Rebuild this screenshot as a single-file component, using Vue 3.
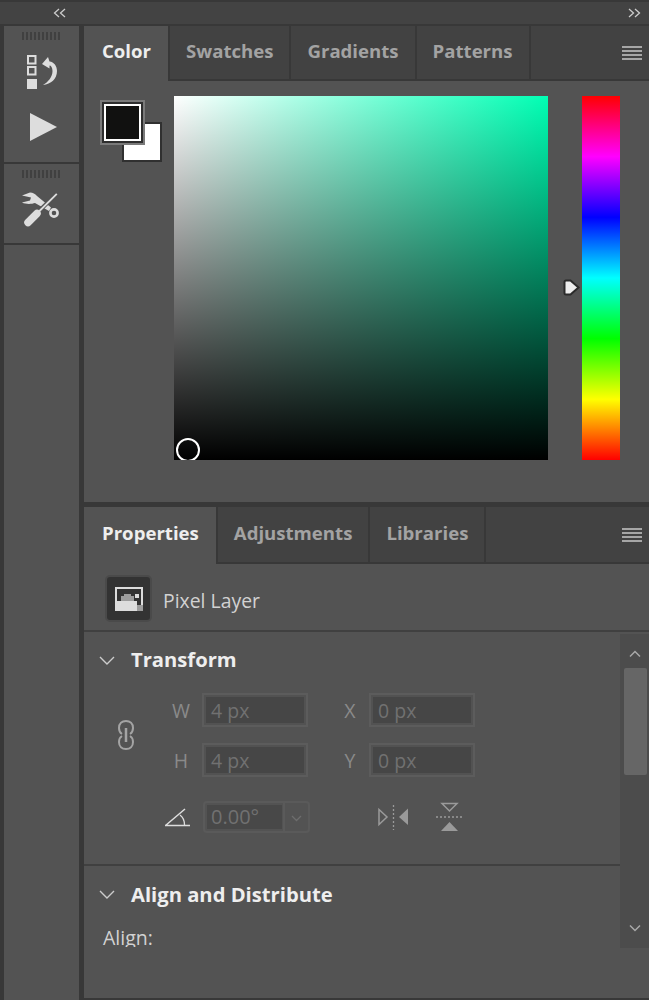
<template>
  <div class="app">
    <!-- collapse strip -->
    <div class="topbar">
      <div class="top-left">
        <svg width="14" height="10" viewBox="0 0 14 10"><path d="M6 1L1.500 5 6 9M12 1L7.500 5 12 9" fill="none" stroke="#ccc" stroke-width="1.300"/></svg>
      </div>
      <div class="top-right">
        <svg width="14" height="10" viewBox="0 0 14 10"><path d="M2 1L6.500 5 2 9M8 1L12.500 5 8 9" fill="none" stroke="#ccc" stroke-width="1.300"/></svg>
      </div>
    </div>

    <div class="body">
      <!-- left icon dock -->
      <aside class="dock">
        <div class="dock-group g1">
          <div class="grip"></div>
          <button class="dock-btn history" type="button">
            <svg width="30" height="34" viewBox="0 0 30 34">
              <rect x="1" y="1" width="7.500" height="7.500" fill="none" stroke="#ddd" stroke-width="2"/>
              <rect x="1" y="12" width="7.500" height="7.500" fill="none" stroke="#ddd" stroke-width="2"/>
              <rect x="0" y="24" width="10" height="10" fill="#ddd"/>
              <path d="M15 9L21 2 22.500 6.500C27 7 30 11 30 16 30 24 24 29 16 30 21 27 25.500 22 25.500 16 25.500 12.500 24 10.500 22.500 10.500V13.500Z" fill="#ddd"/>
            </svg>
          </button>
          <button class="dock-btn play" type="button">
            <svg width="27" height="28" viewBox="0 0 27 28"><path d="M0 0L27 14 0 28Z" fill="#ddd"/></svg>
          </button>
        </div>
        <div class="dock-group g2">
          <div class="grip"></div>
          <button class="dock-btn tools" type="button">
            <svg width="38" height="36" viewBox="0 0 38 36">
              <path d="M0 3.500L8 0.500C11 0.500 13 2 15 4L29 15.500 27 19 13 11C10 12 4 12.500 0 10.500L8 8.500 9 5.500Z" fill="#ddd"/>
              <circle cx="32" cy="21" r="3.600" fill="none" stroke="#ddd" stroke-width="2.600"/>
              <path d="M34.500 2L16 20" stroke="#535353" stroke-width="4"/>
              <path d="M34.800 1.800L16 20.500" stroke="#ddd" stroke-width="1.800"/>
              <path d="M6 30.500L15 21.500" stroke="#ddd" stroke-width="7.500" stroke-linecap="round"/>
            </svg>
          </button>
        </div>
        <div class="dock-rest"></div>
      </aside>

      <main class="main">
        <!-- Color panel -->
        <section class="panel color-panel">
          <div class="tabs">
            <div v-for="t in colorTabs" :key="t" class="tab" :class="{ active: t === 'Color' }">{{ t }}</div>
            <div class="tab-fill">
              <span class="menu-icon"><i></i><i></i><i></i><i></i></span>
            </div>
          </div>
          <div class="color-body">
            <div class="swatches">
              <div class="swatch bg"></div>
              <div class="swatch fg"></div>
            </div>
            <div class="picker">
              <div class="picker-dot"></div>
            </div>
            <div class="hue-wrap">
              <div class="hue"></div>
              <svg class="hue-marker" width="17" height="17" viewBox="0 0 17 17">
                <path d="M3 1.500H7.500L15.500 8.500 7.500 15.500H3C2 15.500 1.500 15 1.500 14V3C1.500 2 2 1.500 3 1.500Z" fill="#eee" stroke="#2b2b2b" stroke-width="2"/>
              </svg>
            </div>
          </div>
        </section>

        <div class="panel-gap"></div>

        <!-- Properties panel -->
        <section class="panel props-panel">
          <div class="tabs">
            <div v-for="t in propTabs" :key="t" class="tab" :class="{ active: t === 'Properties' }">{{ t }}</div>
            <div class="tab-fill">
              <span class="menu-icon"><i></i><i></i><i></i><i></i></span>
            </div>
          </div>

          <div class="layer-row">
            <div class="layer-thumb">
              <svg width="28" height="24" viewBox="0 0 28 24" shape-rendering="crispEdges">
                <rect x="0" y="0" width="28" height="24" fill="#ddd"/>
                <rect x="2" y="2" width="24" height="16" fill="#333"/>
                <path d="M9 7H16V9H19V14H6V9H9Z" fill="#9c9c9c"/>
                <path d="M2 18V14H22V18Z" fill="#ddd"/>
                <rect x="20" y="7" width="4" height="4" fill="#ddd"/>
                <rect x="22" y="18" width="6" height="6" fill="#9c9c9c"/>
              </svg>
            </div>
            <span class="layer-name">Pixel Layer</span>
          </div>

          <div class="props-scroll">
            <div class="props-content">
              <div class="section transform">
                <div class="sec-head">
                  <svg class="chev" width="16" height="10" viewBox="0 0 16 10"><path d="M1 1L8 8 15 1" fill="none" stroke="#ccc" stroke-width="1.400"/></svg>
                  <span class="sec-title">Transform</span>
                </div>
                <div class="tf-grid">
                  <svg class="link" width="16" height="30" viewBox="0 0 16 30">
                    <path d="M4 14C1.500 12.500 1 10.500 1 8 1 3.500 4 1 8 1 12 1 15 3.500 15 8 15 10.500 14.500 12.500 12 14M4 16C1.500 17.500 1 19.500 1 22 1 26.500 4 29 8 29 12 29 15 26.500 15 22 15 19.500 14.500 17.500 12 16" fill="none" stroke="#a4a4a4" stroke-width="2"/>
                    <path d="M8 8V22" stroke="#a4a4a4" stroke-width="2.500"/>
                  </svg>
                  <div class="fields">
                    <div class="field-row">
                      <label class="f-label">W</label><div class="f-input">4 px</div>
                      <label class="f-label second">X</label><div class="f-input">0 px</div>
                    </div>
                    <div class="field-row">
                      <label class="f-label">H</label><div class="f-input">4 px</div>
                      <label class="f-label second">Y</label><div class="f-input">0 px</div>
                    </div>
                  </div>
                </div>
                <div class="angle-row">
                  <svg class="angle" width="27" height="19" viewBox="0 0 27 19">
                    <path d="M1 17.500H26M1.500 17.500L21 1" fill="none" stroke="#ddd" stroke-width="1.500"/>
                    <path d="M16 7C19.500 9.500 20.500 13 20.500 17" fill="none" stroke="#ddd" stroke-width="1.300"/>
                  </svg>
                  <div class="angle-box">
                    <span class="angle-val">0.00°</span>
                    <span class="angle-drop">
                      <svg width="11" height="7" viewBox="0 0 11 7"><path d="M1 1L5.500 5.500 10 1" fill="none" stroke="#6d6d6d" stroke-width="1.300"/></svg>
                    </span>
                  </div>
                  <svg class="flip-h" width="31" height="28" viewBox="0 0 31 28">
                    <path d="M1 6.500L9 14 1 21.500Z" fill="none" stroke="#9a9a9a" stroke-width="1.500"/>
                    <path d="M30 5.500V22L21 14Z" fill="#9a9a9a"/>
                    <path d="M15.500 2V27" stroke="#9a9a9a" stroke-width="1.300" stroke-dasharray="2 2"/>
                  </svg>
                  <svg class="flip-v" width="27" height="30" viewBox="0 0 27 30">
                    <path d="M6 1.500H21L13.500 9Z" fill="none" stroke="#9a9a9a" stroke-width="1.500"/>
                    <path d="M5 29L13.500 20 22 29Z" fill="#9a9a9a"/>
                    <path d="M0 15H27" stroke="#9a9a9a" stroke-width="1.300" stroke-dasharray="2 2"/>
                  </svg>
                </div>
              </div>
              <div class="section align">
                <div class="sec-head">
                  <svg class="chev" width="16" height="10" viewBox="0 0 16 10"><path d="M1 1L8 8 15 1" fill="none" stroke="#ccc" stroke-width="1.400"/></svg>
                  <span class="sec-title">Align and Distribute</span>
                </div>
                <div class="align-label">Align:</div>
              </div>
            </div>
            <div class="scrollbar">
              <svg class="sb-arrow up" width="12" height="8" viewBox="0 0 12 8"><path d="M1 6.500L6 1.500 11 6.500" fill="none" stroke="#a8a8a8" stroke-width="1.500"/></svg>
              <div class="sb-thumb"></div>
              <div class="sb-track"></div>
              <svg class="sb-arrow down" width="12" height="8" viewBox="0 0 12 8"><path d="M1 1.500L6 6.500 11 1.500" fill="none" stroke="#a8a8a8" stroke-width="1.500"/></svg>
            </div>
          </div>
        </section>
      </main>
    </div>
  </div>
</template>

<script setup>
const colorTabs = ['Color', 'Swatches', 'Gradients', 'Patterns']
const propTabs = ['Properties', 'Adjustments', 'Libraries']
</script>

<style>
html, body { margin: 0; background: #383838; }
</style>

<style scoped>
.app {
  width: 649px; height: 1000px; overflow: hidden;
  background: #383838;
  font-family: "Open Sans", "Noto Sans", sans-serif;
  display: flex; flex-direction: column;
}
.topbar {
  height: 22px; margin: 2px 0;
  background: #434343;
  display: flex; align-items: center; justify-content: space-between;
  flex: none;
}
.top-left { width: 120px; display: flex; justify-content: center; }
.top-right { padding-right: 8px; display: flex; }

.body { flex: 1; display: flex; min-height: 0; }

.dock {
  width: 75px; margin-left: 4px; margin-right: 5px;
  display: flex; flex-direction: column;
  flex: none;
}
.dock-group { background: #535353; display: flex; flex-direction: column; align-items: center; }
.g1 { height: 136px; margin-bottom: 2px; }
.g2 { height: 79px; margin-bottom: 2px; }
.dock-rest { flex: 1; background: #535353; }
.grip {
  width: 39px; height: 8px; margin-top: 6px;
  background: repeating-linear-gradient(to right, #404040 0 2px, #535353 2px 4px);
}
.dock-btn { border: 0; background: none; padding: 0; display: flex; line-height: 0; }
.history { margin-top: 15px; margin-left: 1px; }
.play { margin-top: 24px; margin-left: 3px; }
.tools { margin-top: 14px; margin-right: 2px; }

.main { flex: 1; display: flex; flex-direction: column; min-width: 0; }
.panel { background: #535353; display: flex; flex-direction: column; }
.color-panel { height: 476px; flex: none; }
.panel-gap { height: 5px; flex: none; }
.props-panel { flex: 1; margin-bottom: 2px; min-height: 0; }

.tabs { display: flex; height: 55px; flex: none; background: #424242; }
.props-panel .tabs { height: 57px; }
.tab {
  padding: 0 16px 5px 16px;
  display: flex; align-items: center;
  font-size: 18.600px; font-weight: 700; color: #a3a3a3;
  border-right: 2px solid #383838;
  border-bottom: 2px solid #383838;
  box-sizing: border-box;
}
.tab:first-child { padding-left: 18px; padding-right: 17px; }
.tab.active {
  background: #535353; color: #eeeeee;
  border-bottom: 0;
  padding-bottom: 7px;
}
.tab-fill {
  flex: 1;
  border-bottom: 2px solid #383838;
  display: flex; align-items: center; justify-content: flex-end;
  padding-right: 7px;
}
.menu-icon { display: flex; flex-direction: column; gap: 2px; }
.menu-icon i { display: block; width: 20px; height: 2px; background: #a6a6a6; }

.color-body {
  flex: 1; position: relative;
  display: flex; align-items: flex-start;
  padding: 15px 29px 0 16px;
}
.swatches { width: 62px; height: 62px; position: relative; flex: none; margin-top: 4px; margin-right: 12px; }
.swatch { position: absolute; box-sizing: border-box; }
.swatch.bg { left: 22px; top: 22px; width: 40px; height: 40px; background: #fff; border: 2px solid #303030; }
.swatch.fg {
  left: 4px; top: 4px; width: 37px; height: 37px;
  background: #111110;
  border: 2px solid #fff;
  box-shadow: 0 0 0 2px #2e2e2e, 0 0 0 4px #7a7a7a;
}
.picker {
  width: 374px; height: 364px; flex: none; position: relative; overflow: hidden;
  background:
    linear-gradient(to top, #000, rgba(0, 0, 0, 0)),
    linear-gradient(to right, #fff, #00ffb4);
}
.picker-dot {
  position: absolute; left: 2px; bottom: -2px;
  width: 24px; height: 24px; box-sizing: border-box;
  border: 2px solid #fff; border-radius: 50%;
}
.hue-wrap { position: relative; margin-left: 34px; }
.hue {
  width: 38px; height: 364px;
  background: linear-gradient(to bottom, #ff0000 0%, #ff00ff 16.670%, #0000ff 33.330%, #00ffff 50%, #00ff00 66.670%, #ffff00 83.330%, #ff0000 100%);
}
.hue-marker { position: absolute; left: -19px; top: 183px; }

.layer-row {
  height: 68px; flex: none; box-sizing: border-box;
  border-bottom: 2px solid #404040;
  display: flex; align-items: center;
  padding: 3px 0 0 21px; gap: 11px;
}
.layer-thumb {
  width: 47px; height: 47px; box-sizing: border-box;
  background: #333; border: 2px solid #4a4a4a; border-radius: 5px;
  display: flex; align-items: center; justify-content: center;
}
.layer-name { font-size: 19.400px; color: #d2d2d2; margin-top: 4px; }

.props-scroll { flex: 1; display: flex; align-items: flex-start; min-height: 0; }
.props-content { flex: 1; min-width: 0; }
.section.transform { height: 234px; box-sizing: border-box; border-bottom: 2px solid #404040; }
.sec-head { display: flex; align-items: center; height: 57px; padding-left: 15px; }
.chev { margin-right: 16px; }
.sec-title { font-size: 20.200px; font-weight: 700; color: #eeeeee; margin-bottom: 3px; }

.tf-grid { display: flex; align-items: center; padding-left: 34px; margin-top: 4px; }
.link { margin-right: 38px; }
.fields { display: flex; flex-direction: column; gap: 16px; }
.field-row { display: flex; align-items: center; height: 34px; }
.f-label { font-size: 19.500px; color: #8a8a8a; text-align: center; }
.f-label.second { margin-left: 24px; width: 36px; margin-right: 1px; }
.f-label:first-child { width: 18px; margin-right: 12px; }
.f-input {
  width: 106px; height: 34px; box-sizing: border-box;
  background: #464646; border: 2px solid #5c5c5c;
  box-shadow: inset 0 0 0 2px #525252;
  padding: 0 0 0 7px;
  font-size: 19.500px; line-height: 32px; color: #717171;
}
.angle-row { display: flex; align-items: center; margin-top: 24px; padding-left: 80px; }
.angle { margin-right: 12px; }
.angle-box {
  width: 107px; height: 32px; box-sizing: border-box;
  border: 2px solid #5a5a5a; border-radius: 4px;
  display: flex;
}
.angle-val {
  width: 75px; background: #484848; margin: 2px 0 2px 2px;
  font-size: 20px; line-height: 24px; color: #717171; padding-left: 4px; box-sizing: border-box;
}
.angle-drop {
  flex: 1; border-left: 2px solid #5a5a5a; margin-left: 1px;
  display: flex; align-items: center; justify-content: center; padding-top: 3px;
}
.flip-h { margin-left: 68px; }
.flip-v { margin-left: 27px; }

.align .sec-head { height: 58px; }
.align-label {
  font-size: 19.500px; color: #d2d2d2; padding-left: 19px;
  height: 23px; line-height: 28px; overflow: hidden;
}

.scrollbar {
  width: 29px; flex: none; height: 314px; margin-top: 2px;
  background: #4c4c4c;
  display: flex; flex-direction: column; align-items: center;
}
.sb-arrow { flex: none; }
.sb-arrow.up { margin: 16px 0 10px; }
.sb-arrow.down { margin-bottom: 16px; }
.sb-thumb { width: 23px; height: 107px; background: #666; border-radius: 2px; flex: none; margin-left: 1px; }
.sb-track { flex: 1; }
</style>
